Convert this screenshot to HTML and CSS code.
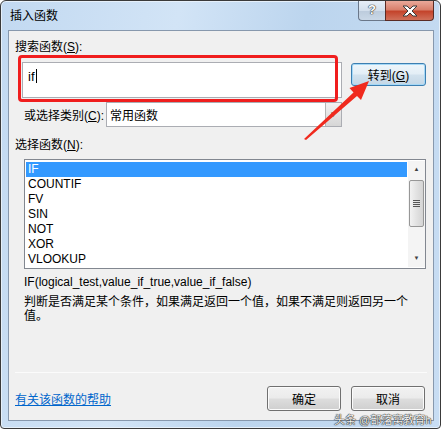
FILE: index.html
```html
<!DOCTYPE html>
<html lang="zh-CN">
<head>
    <meta charset="UTF-8">
    <title>插入函数</title>
    <link rel="stylesheet" href="styles.css">
</head>
<body>

    <div class="window">
        <!-- Title bar -->
        <div class="titlebar">
            <span class="title">插入函数</span>
            <div class="caption-btns">
                <div class="cap-help">?</div>
                <div class="cap-close">
                    <svg width="16" height="12" viewBox="0 0 16 12">
                        <polygon points="1,1 5,1 8,4 11,1 15,1 10,6 15,11 11,11 8,8 5,11 1,11 6,6" fill="#fff" stroke="#3b3b3b" stroke-width="1"/>
                    </svg>
                </div>
            </div>
        </div>

        <!-- Client area -->
        <div class="client">
            <div class="label label-search">搜索函数(<u>S</u>):</div>
            <div class="search-row">
                <div class="search-box">if<span class="caret"></span></div>
                <button class="btn btn-default">转到(<u>G</u>)</button>
            </div>
            <div class="cat-row">
                <span class="cat-label">或选择类别(<u>C</u>):</span>
                <div class="select">
                    <span>常用函数</span>
                    <div class="select-arrow">▾</div>
                </div>
            </div>
            <div class="label label-list">选择函数(<u>N</u>):</div>
            <div class="listbox">
                <ul class="items">
                    <li class="selected">IF</li>
                    <li>COUNTIF</li>
                    <li>FV</li>
                    <li>SIN</li>
                    <li>NOT</li>
                    <li>XOR</li>
                    <li>VLOOKUP</li>
                </ul>
                <div class="scrollbar">
                    <div class="sb-arrow">▲</div>
                    <div class="sb-track">
                        <div class="sb-thumb"><span></span><span></span><span></span><span></span></div>
                    </div>
                    <div class="sb-arrow">▼</div>
                </div>
            </div>
            <div class="syntax">IF(logical_test,value_if_true,value_if_false)</div>
            <div class="desc">判断是否满足某个条件，如果满足返回一个值，如果不满足则返回另一个值。</div>
            <div class="sep"></div>
            <div class="footer">
                <a href="#" class="help-link">有关该函数的帮助</a>
                <div class="footer-btns">
                    <button class="btn">确定</button>
                    <button class="btn">取消</button>
                </div>
            </div>
        </div>

        <!-- Annotations -->
        <div class="red-box"></div>
        <svg class="red-arrow" width="441" height="429" viewBox="0 0 441 429">
            <polygon points="304,139 353.5,92.5 349.5,88 369,81 361,100 357,96 306,140" fill="#f02a1e"/>
        </svg>
        <div class="watermark">头条 @部落窝教育h</div>
    </div>

</body>
</html>
```

FILE: styles.css
```css
* {
    box-sizing: border-box;
}
body {
    margin: 0;
    padding: 0;
    font-family: "Liberation Sans", "Noto Sans CJK SC", sans-serif;
    font-size: 12px;
    color: #000;
    background: #fff;
}
/* Window frame */
.window {
    position: relative;
    width: 441px;
    height: 429px;
    border: 1px solid #3a3a3a;
    border-radius: 6px 6px 4px 4px;
    padding: 0 6px 7px 7px;
    background: linear-gradient(100deg, #c2d9f1 0%, #d2e4f6 35%, #bcd5ee 60%, #c8ddf3 100%);
    box-shadow: inset 0 0 0 1px #e6f0fa;
    display: flex;
    flex-direction: column;
}
.titlebar {
    height: 29px;
    display: flex;
    align-items: center;
    padding-left: 2px;
}
.title {
    font-size: 12px;
    line-height: 14px;
    color: #000;
}
.caption-btns {
    margin-left: auto;
    align-self: flex-start;
    display: flex;
    height: 20px;
}
.cap-help {
    width: 27px;
    height: 20px;
    border: 1px solid #6a7789;
    border-top: none;
    border-right: none;
    border-radius: 0 0 0 4px;
    background: linear-gradient(#e6eef7 0%, #d3dfec 50%, #bccbdc 51%, #cad8e7 100%);
    color: #fff;
    font-weight: bold;
    font-size: 13px;
    line-height: 18px;
    text-align: center;
    text-shadow: 0 0 1px #333, 0 0 1px #333, 0 0 1px #333;
}
.cap-close {
    width: 49px;
    height: 20px;
    border: 1px solid #5a2b24;
    border-top: none;
    border-radius: 0 0 4px 0;
    background: linear-gradient(#e9a99a 0%, #d8806c 45%, #c4442c 55%, #d0705a 100%);
    display: flex;
    align-items: center;
    justify-content: center;
}
/* Client area */
.client {
    height: 391px;
    border: 1px solid #8798ad;
    background: #f0f0f0;
    padding: 0 6px;
    display: flex;
    flex-direction: column;
}
.label {
    line-height: 15px;
    height: 15px;
}
.label-search {
    margin-top: 9px;
}
.search-row {
    display: flex;
    align-items: flex-start;
    margin-top: 7px;
}
.search-box {
    width: 320px;
    height: 36px;
    margin-left: 7px;
    border: 1px solid #abadb3;
    background: #fff;
    padding: 6px 0 0 5px;
    line-height: 15px;
    font-size: 13px;
}
.caret {
    display: inline-block;
    width: 1px;
    height: 14px;
    background: #000;
    vertical-align: -2px;
    margin-left: 1px;
}
.btn {
    font-family: "Liberation Sans", "Noto Sans CJK SC", sans-serif;
    font-size: 12px;
    color: #000;
    height: 25px;
    width: 74px;
    padding: 0;
    border: 1px solid #707070;
    border-radius: 3px;
    background: linear-gradient(#f2f2f2 0%, #ebebeb 48%, #dddddd 52%, #cfcfcf 100%);
    box-shadow: inset 0 0 0 1px #fbfbfb;
}
.btn-default {
    height: 23px;
    width: 75px;
    margin-left: 9px;
    margin-top: 1px;
    border-color: #3c7fb1;
    box-shadow: inset 0 0 0 1px #a6d8f6;
    background: linear-gradient(#eef6fb 0%, #e3eef6 48%, #d2e2ee 52%, #c4d7e6 100%);
}
.cat-row {
    display: flex;
    align-items: center;
    margin-top: 4px;
}
.cat-label {
    margin-left: 9px;
    width: 82px;
}
.select {
    width: 236px;
    height: 25px;
    border: 1px solid #abadb3;
    background: #fff;
    display: flex;
    align-items: center;
    padding-left: 3px;
}
.select span {
    flex: 1;
}
.select-arrow {
    width: 16px;
    height: 23px;
    background: linear-gradient(#f2f2f2, #d6d6d6);
    border-left: 1px solid #b5b5b5;
    font-size: 9px;
    line-height: 23px;
    text-align: center;
    color: #333;
}
.label-list {
    margin-top: 11px;
}
/* Function list */
.listbox {
    margin-top: 6px;
    margin-left: 9px;
    width: 402px;
    height: 110px;
    border: 1px solid #828790;
    background: #fff;
    display: flex;
}
.items {
    list-style: none;
    margin: 0;
    padding: 2px 1px 0 1px;
    flex: 1;
}
.items li {
    height: 15px;
    line-height: 15px;
    padding-left: 2px;
    font-size: 12px;
}
.items li.selected {
    background: #3399ff;
    color: #fff;
}
.scrollbar {
    width: 17px;
    margin: 1px 0;
    background: #f4f4f4;
    display: flex;
    flex-direction: column;
}
.sb-arrow {
    height: 17px;
    font-size: 6px;
    line-height: 17px;
    text-align: center;
    color: #404040;
}
.sb-track {
    flex: 1;
}
.sb-thumb {
    margin: 2px 1px 0 1px;
    height: 47px;
    border: 1px solid #979797;
    border-radius: 2px;
    background: linear-gradient(90deg, #f2f2f2, #e2e2e2 50%, #d4d4d4);
    display: flex;
    flex-direction: column;
    justify-content: center;
    align-items: center;
    gap: 1px;
}
.sb-thumb span {
    width: 7px;
    height: 1px;
    background: #555;
}
/* Description */
.syntax {
    margin-top: 6px;
    margin-left: 9px;
    line-height: 15px;
}
.desc {
    margin-top: 5px;
    margin-left: 9px;
    width: 390px;
    line-height: 14px;
}
.sep {
    margin-top: 49px;
    height: 1px;
    background: #dcdcdc;
    border-bottom: 1px solid #fbfbfb;
}
.footer {
    display: flex;
    align-items: center;
    margin-top: 13px;
}
.help-link {
    color: #0066cc;
    text-decoration: underline;
}
.footer-btns {
    margin-left: auto;
    margin-right: 2px;
    display: flex;
    gap: 10px;
}
/* Annotations */
.red-box {
    position: absolute;
    left: 17px;
    top: 54px;
    width: 320px;
    height: 47px;
    border: 3px solid #f01e1e;
    border-radius: 4px;
}
.red-arrow {
    position: absolute;
    left: -1px;
    top: -1px;
}
.watermark {
    position: absolute;
    left: 333px;
    top: 412px;
    font-size: 11px;
    line-height: 15px;
    color: #f4f4f4;
    text-shadow: 0 0 1px #222, 0 0 1px #222, 0 0 1px #444;
}
```
